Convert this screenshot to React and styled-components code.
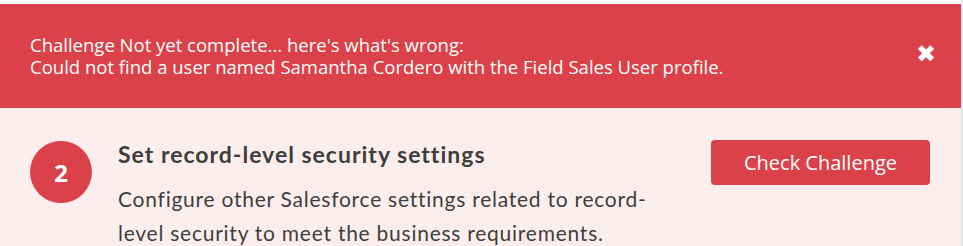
import React from 'react';
import styled, { createGlobalStyle } from 'styled-components';

const GlobalStyle = createGlobalStyle`
  html, body {
    margin: 0;
    padding: 0;
    background: #ffffff;
  }
  * {
    box-sizing: border-box;
  }
`;

export default function App() {
  return (
    <>
      <GlobalStyle />
      <Page>
        <ErrorBanner>
          <Message>
            <p>Challenge Not yet complete... here&apos;s what&apos;s wrong:</p>
            <p>Could not find a user named Samantha Cordero with the Field Sales User profile.</p>
          </Message>
          <CloseButton type="button" aria-label="Close">✖</CloseButton>
        </ErrorBanner>
        <Step>
          <StepNumber>2</StepNumber>
          <StepBody>
            <StepTitle>Set record-level security settings</StepTitle>
            <StepText>
              Configure other Salesforce settings related to record-level security to meet the business requirements.
            </StepText>
          </StepBody>
          <CheckButton type="button">Check Challenge</CheckButton>
        </Step>
      </Page>
    </>
  );
}

const Page = styled.div`
  width: 963px;
  height: 246px;
  padding-top: 4px;
  border-right: 2px solid #e6e6e6;
  overflow: hidden;
`;

const ErrorBanner = styled.div`
  height: 104px;
  background-color: #db4148;
  display: flex;
  align-items: center;
  justify-content: space-between;
  padding: 0 25px 0 30px;
  color: #ffffff;
`;

const Message = styled.div`
  font-family: 'Open Sans', sans-serif;
  font-size: 18.5px;
  line-height: 22px;
  p {
    margin: 0;
  }
`;

const CloseButton = styled.button`
  background: none;
  border: none;
  padding: 0;
  margin-bottom: 5px;
  color: #ffffff;
  font-family: 'DejaVu Sans', sans-serif;
  font-size: 24px;
  line-height: 1;
  cursor: pointer;
`;

const Step = styled.div`
  height: 138px;
  background-color: #fdeeee;
  display: flex;
  align-items: flex-start;
  padding: 33px 31px 0 30px;
`;

const StepNumber = styled.div`
  width: 62px;
  height: 62px;
  flex-shrink: 0;
  border-radius: 50%;
  background-color: #db4148;
  color: #ffffff;
  display: flex;
  align-items: center;
  justify-content: center;
  font-family: 'Open Sans', sans-serif;
  font-weight: 700;
  font-size: 24px;
`;

const StepBody = styled.div`
  margin-left: 26px;
  width: 545px;
  font-family: 'Lato', sans-serif;
  color: #3e3e3c;
`;

const StepTitle = styled.h2`
  margin: 0;
  font-size: 23px;
  font-weight: 700;
  line-height: 26px;
  letter-spacing: 1px;
`;

const StepText = styled.p`
  margin: 15px 0 0;
  font-size: 21px;
  line-height: 34px;
  letter-spacing: 0.75px;
`;

const CheckButton = styled.button`
  margin-left: auto;
  margin-top: -1px;
  width: 219px;
  height: 45px;
  border: none;
  border-radius: 4px;
  background-color: #db4148;
  color: #ffffff;
  font-family: 'Open Sans', sans-serif;
  font-size: 20px;
  cursor: pointer;
`;
